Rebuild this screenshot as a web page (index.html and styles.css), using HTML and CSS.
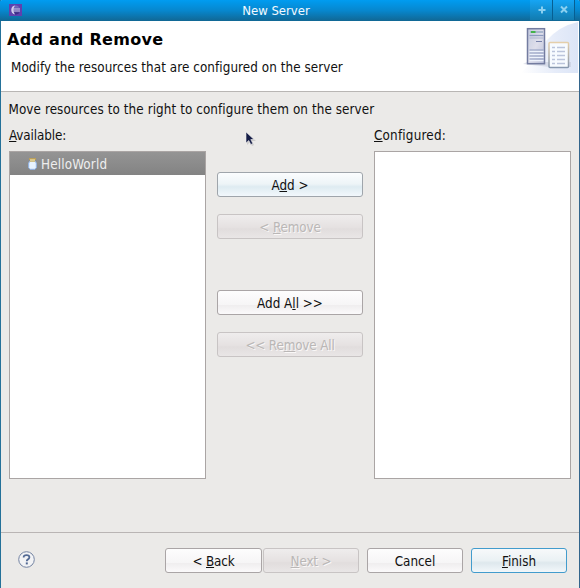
FILE: index.html
```
<!DOCTYPE html>
<html lang="en">
<head>
<meta charset="utf-8">
<title>New Server</title>
<link rel="stylesheet" href="styles.css">
</head>
<body>
<div class="window">
  <header class="titlebar">
    <svg class="app-icon" width="13" height="12" viewBox="0 0 13 12"><defs><linearGradient id="ball" x2="0" y2="1"><stop offset="0" stop-color="#7a74c4"/><stop offset="1" stop-color="#35257f"/></linearGradient></defs><rect width="13" height="12" fill="#6040ae"/><circle cx="6.5" cy="6" r="4.6" fill="url(#ball)"/><path d="M6 1.4A4.7 4.7 0 0 0 6 10.6Q2.8 6 6 1.4" fill="#d5cced"/><path d="M3 5h8M3 7h8" stroke="#d0cbee"/></svg>
    <h1 class="title">New Server</h1>
    <div class="window-buttons">
      <span class="window-button"><svg width="22" height="20" viewBox="0 0 22 20"><path d="M12 6.5v7M8.5 10h7" stroke="#8bd0f0" stroke-width="2"/></svg></span>
      <span class="window-button close"><svg width="21" height="20" viewBox="0 0 21 20"><path d="M8 6.5l6 6M14 6.5l-6 6" stroke="#8bd0f0" stroke-width="2"/></svg></span>
    </div>
  </header>
  <section class="banner">
    <div class="banner-copy"><h2>Add and Remove</h2><p>Modify the resources that are configured on the server</p></div>
    <svg class="server-art" width="58" height="53" viewBox="0 0 58 53">
      <defs><linearGradient id="haze" x2="1"><stop offset="0" stop-color="#fff"/><stop offset=".6" stop-color="#e6ecf9"/><stop offset="1" stop-color="#dce5f7"/></linearGradient><linearGradient id="case" x2="1" y2="1"><stop offset="0" stop-color="#c3cadf"/><stop offset=".5" stop-color="#dfdfeb"/><stop offset="1" stop-color="#b7bdd8"/></linearGradient><linearGradient id="edge" x2="0" y2="1"><stop offset="0" stop-color="#e5cfaa"/><stop offset="1" stop-color="#8798af"/></linearGradient></defs>
      <path d="M57 1Q38 5 25 20Q14 38 0 52H57Z" fill="url(#haze)"/>
      <path d="M2 43L6 41H50V46H29Z" fill="#bfc5d8" opacity=".5"/>
      <rect x="6.5" y="7.7" width="17" height="35" fill="url(#case)" stroke="#737ca0" stroke-width="1.5"/>
      <path d="M9 11h13" stroke="#aab7ce" stroke-width="2"/><path d="M10 11h4.5" stroke="#43b34a" stroke-width="2"/>
      <path d="M8.5 14.5h14" stroke="#8d9bc0" stroke-width="1.3"/><path d="M8.5 17h14" stroke="#adb5cf"/><path d="M8.5 30.5h14M8.5 33.5h14M8.5 36.5h14M8.5 39.5h14" stroke="#eef3fc" stroke-width="1.5"/><path d="M8.5 29h14M8.5 32h14M8.5 35h14M8.5 38h14" stroke="#8d9bc0"/><path d="M15 20.5h6" stroke="#7782ab"/>
      <rect x="28" y="21.5" width="19.5" height="25" rx="1" fill="#f7fbff" stroke="url(#edge)" stroke-width="1.5"/>
      <path d="M31 26.5h3M36 26.5h8M31 30.5h3M36 30.5h8M31 34.5h3M36 34.5h8M31 38.5h3M36 38.5h8M31 42.5h3M36 42.5h8" stroke="#bac4db" stroke-width="1.4"/>
    </svg>
  </section>
  <main class="content">
    <p class="instruction">Move resources to the right to configure them on the server</p>
    <div class="transfer">
      <section class="column"><h3 class="available"><u>A</u>vailable:</h3><div class="list"><div class="list-item"><svg width="9" height="12" viewBox="0 0 9 12"><path d="M2 3h5l1.3 2v4.7L7 11.3H2L.7 9.7V5Z" fill="#e8f3ff" stroke="#91b5ea"/><path d="M1 1h7M2 3h5" stroke="#e3ae25" stroke-width="1.1"/><path d="M2 2h5" stroke="#fff1b8"/></svg><span>HelloWorld</span></div></div></section>
      <div class="actions">
        <button class="btn hover">A<u>d</u>d &gt;</button>
        <button class="btn remove" disabled>&lt; <u>R</u>emove</button>
        <button class="btn all">Add A<u>l</u>l &gt;&gt;</button>
        <button class="btn remove" disabled>&lt;&lt; Re<u>m</u>ove All</button>
      </div>
      <section class="column"><h3 class="configured"><u>C</u>onfigured:</h3><div class="list"></div></section>
    </div>
  </main>
  <footer class="footer">
    <svg class="help" width="17" height="17" viewBox="0 0 17 17"><circle cx="8.5" cy="8.5" r="7.8" fill="#f2f3f5" stroke="#7484a2" stroke-width="1"/><path d="M5.7 6.6V5.8Q5.8 4.1 8.5 4.1Q11.4 4.1 11.4 6.3Q11.4 7.7 9.7 8.6Q8.8 9.2 8.8 10.2" fill="none" stroke="#536a94" stroke-width="1.8"/><path d="M7.8 12.4h2" stroke="#536a94" stroke-width="2"/></svg>
    <button class="btn back">&lt; <u>B</u>ack</button><button class="btn next" disabled><u>N</u>ext &gt;</button><button class="btn cancel">Cancel</button><button class="btn finish"><u>F</u>inish</button>
  </footer>
  <svg class="cursor" width="12" height="18" viewBox="0 0 12 18"><path d="M2 2v12l3-3 2 4 2-1-2-4h4Z" fill="#aaa" opacity=".45"/><path d="M1 1v11l2.8-2.5 2 4 2-1-2-4H9Z" fill="#151d46" stroke="#eee" stroke-width=".6"/></svg>
</div>
</body>
</html>
```
FILE: styles.css
```
* { box-sizing: border-box; }
body { margin: 0; font: 13.333px "DejaVu Sans Condensed", "DejaVu Sans", sans-serif; color: #111; }
h1, h2, h3, p { margin: 0; font: inherit; }
u { text-decoration: underline; text-decoration-thickness: 1px; text-underline-offset: 1px; text-decoration-skip-ink: none; }
.window { position: relative; height: 588px; display: flex; flex-direction: column; background: linear-gradient(90deg, #247199 1px, #ebeae8 1px, #ebeae8 579px, #33658c 579px); overflow: hidden; }
.titlebar { height: 21px; flex: none; display: grid; grid-template-columns: 30px 1fr 50px; background: linear-gradient(#009cf1, #0787ce 50%, #116794); color: #f4faff; border-top-left-radius: 2px; border-top-right-radius: 2px; }
.app-icon { margin: 4px 0 0 9px; }
.title { text-align: center; font-size: 13px; line-height: 21px; padding-right: 8px; }
.window-buttons { display: flex; }
.window-button { width: 23px; height: 20px; background: linear-gradient(#16a5f4, #127baf); border-right: 1px solid #075f92; }
.close { width: 22px; }
.banner { height: 71px; flex: none; margin: 0 1px; background: #fff; border-bottom: 1px solid #b8b6b4; display: flex; justify-content: space-between; }
.banner-copy { padding: 9px 0 0 6px; }
.banner h2 { font: bold 16px/19px "DejaVu Sans", sans-serif; letter-spacing: .3px; color: #000; }
.banner p { margin: 11px 0 0 4px; line-height: 16px; letter-spacing: .07px; }
.content { flex: 1; padding: 10px 9px 0; }
.instruction { line-height: 16px; letter-spacing: .09px; margin-left: -.5px; }
.transfer { display: grid; grid-template-columns: 197px 146px 197px; column-gap: 11px; margin-top: 10px; }
.column h3 { line-height: 16px; margin-bottom: 7px; }
.column .available { letter-spacing: -.1px; }
.column .configured { letter-spacing: .2px; }
.list { height: 328px; background: #fff; border: 1px solid #aaa5a4; }
.list-item { height: 23px; background: linear-gradient(#949494, #838383); color: #eee; display: flex; align-items: center; padding-left: 18px; gap: 4px; letter-spacing: .15px; }
.list-item span { padding-top: 2px; }
.actions { padding-top: 44px; display: flex; flex-direction: column; }
.btn { width: 146px; height: 25px; padding: 1px 0 0; border: 1px solid #aaa5a6; border-radius: 3px; color: #111; background: linear-gradient(#fdfdfd, #f6f5f6 60%, #efedee 61%, #fbfafb); font: inherit; line-height: 23px; flex: none; }
.btn:disabled { color: #bab7b6; background: linear-gradient(#efeded, #e5e1e1 55%, #e1dddd 60%, #e9e6e6); border-color: #c8c4c4; text-shadow: 1px 1px #faf8f8; letter-spacing: -.15px; }
.hover { background: linear-gradient(#fbfdfe, #edf4f7 48%, #deebf1 60%, #f2f8fc); border-color: #9fa5ab; }
.remove { margin-top: 17px; }
.all { margin-top: 51px; }
.footer { height: 56px; flex: none; margin: 0 1px; border-top: 1px solid #b9b5b4; display: flex; padding-top: 15px; }
.help { margin: 3px 0 0 17px; }
.footer .btn { width: 96px; }
.footer .back { margin-left: 130px; width: 97px; letter-spacing: -.15px; }
.next { margin-left: 1px; }
.cancel { margin-left: 8px; }
.footer .finish { margin-left: 8px; border-color: #429ccd; background: linear-gradient(#f7f9fa, #eaf1f4 50%, #dee8ed 60%, #f2f7fa); }
.cursor { position: absolute; left: 245px; top: 131px; }
```
